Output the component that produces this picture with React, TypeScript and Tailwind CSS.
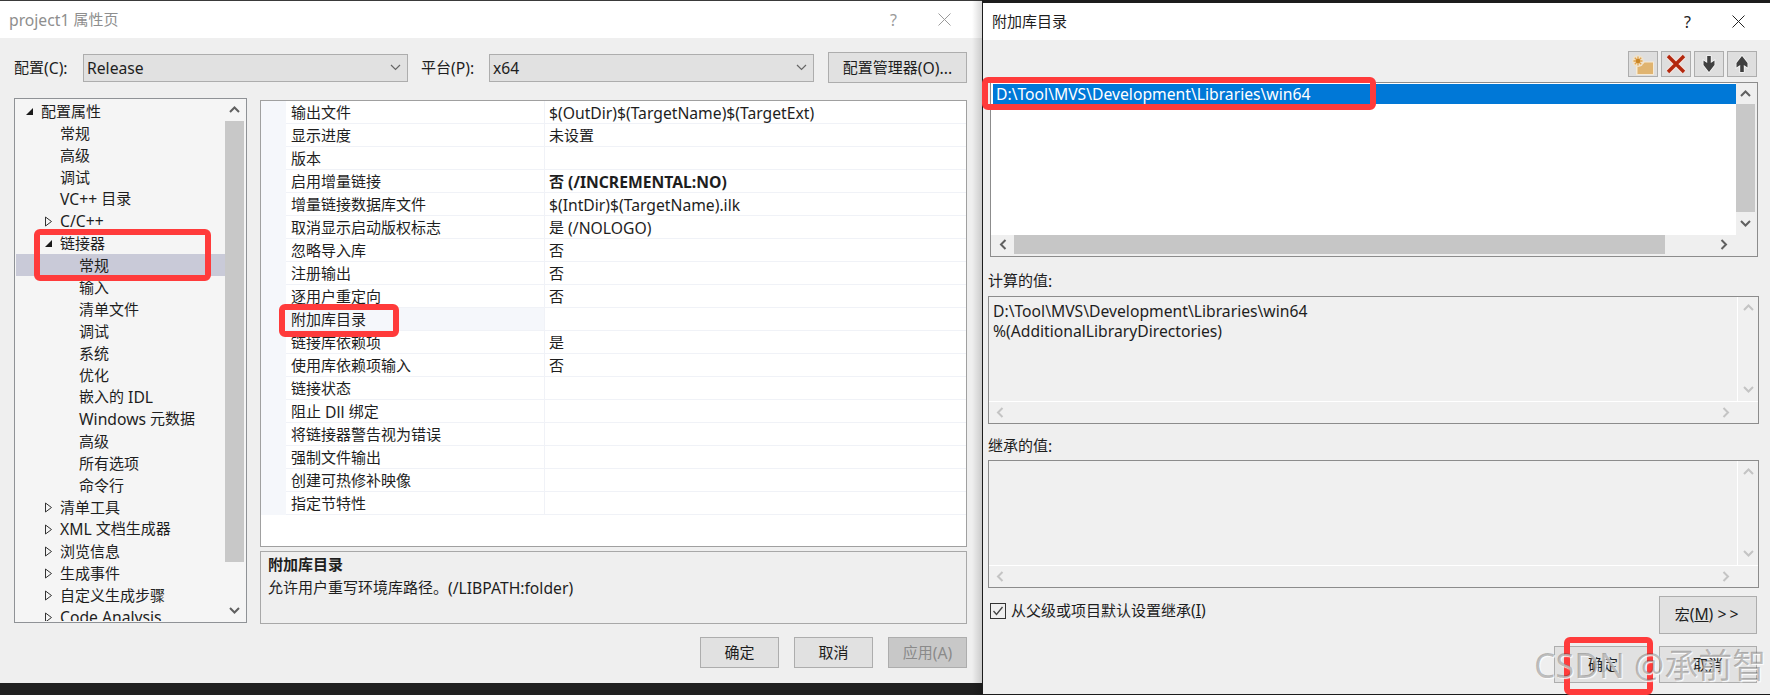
import React from "react";

const FONT = "font-['Noto_Sans','Noto_Sans_CJK_SC',sans-serif]";

type TreeRow = { label: string; level: 0 | 1 | 2; arrow?: "open" | "closed"; selected?: boolean };

const treeRows: TreeRow[] = [
  { label: "配置属性", level: 0, arrow: "open" },
  { label: "常规", level: 1 },
  { label: "高级", level: 1 },
  { label: "调试", level: 1 },
  { label: "VC++ 目录", level: 1 },
  { label: "C/C++", level: 1, arrow: "closed" },
  { label: "链接器", level: 1, arrow: "open" },
  { label: "常规", level: 2, selected: true },
  { label: "输入", level: 2 },
  { label: "清单文件", level: 2 },
  { label: "调试", level: 2 },
  { label: "系统", level: 2 },
  { label: "优化", level: 2 },
  { label: "嵌入的 IDL", level: 2 },
  { label: "Windows 元数据", level: 2 },
  { label: "高级", level: 2 },
  { label: "所有选项", level: 2 },
  { label: "命令行", level: 2 },
  { label: "清单工具", level: 1, arrow: "closed" },
  { label: "XML 文档生成器", level: 1, arrow: "closed" },
  { label: "浏览信息", level: 1, arrow: "closed" },
  { label: "生成事件", level: 1, arrow: "closed" },
  { label: "自定义生成步骤", level: 1, arrow: "closed" },
  { label: "Code Analysis", level: 1, arrow: "closed" },
];

const levelPad = { 0: "pl-[9px]", 1: "pl-[28px]", 2: "pl-[47px]" };

const gridRows: [string, string, boolean?][] = [
  ["输出文件", "$(OutDir)$(TargetName)$(TargetExt)"],
  ["显示进度", "未设置"],
  ["版本", ""],
  ["启用增量链接", "否 (/INCREMENTAL:NO)", true],
  ["增量链接数据库文件", "$(IntDir)$(TargetName).ilk"],
  ["取消显示启动版权标志", "是 (/NOLOGO)"],
  ["忽略导入库", "否"],
  ["注册输出", "否"],
  ["逐用户重定向", "否"],
  ["附加库目录", ""],
  ["链接库依赖项", "是"],
  ["使用库依赖项输入", "否"],
  ["链接状态", ""],
  ["阻止 Dll 绑定", ""],
  ["将链接器警告视为错误", ""],
  ["强制文件输出", ""],
  ["创建可热修补映像", ""],
  ["指定节特性", ""],
];

// latin runs sit a bit bigger and lower than the CJK ones, like the Windows UI font
function T({ s }: { s: string }) {
  return (
    <span>
      {s.split(/([\x00-\x7f]+)/).map((part, i) =>
        /^[\x00-\x7f]+$/.test(part) ? (
          <span key={i} className="relative top-px text-[15.7px]">{part}</span>
        ) : (
          part
        )
      )}
    </span>
  );
}

function Chevron({ dir, light }: { dir: "up" | "down" | "left" | "right"; light?: boolean }) {
  const points = {
    up: "2,8 6.5,3.5 11,8",
    down: "2,4 6.5,8.5 11,4",
    left: "8.5,2 4,6.5 8.5,11",
    right: "4.5,2 9,6.5 4.5,11",
  }[dir];
  return (
    <svg width="13" height="13" viewBox="0 0 13 13" fill="none" stroke={light ? "#c4c4c4" : "#606060"} strokeWidth="2">
      <polyline points={points} />
    </svg>
  );
}

function TreeArrow({ kind }: { kind: "open" | "closed" }) {
  return kind === "open" ? (
    <svg width="9" height="9" viewBox="0 0 9 9">
      <polygon points="8,1 8,8 1,8" fill="#1a1a1a" />
    </svg>
  ) : (
    <svg width="9" height="11" viewBox="0 0 9 11" fill="none" stroke="#333" strokeWidth="1">
      <polygon points="1.5,1 7.5,5.5 1.5,10" />
    </svg>
  );
}

function Caret() {
  return (
    <svg width="11" height="7" viewBox="0 0 11 7" fill="none" stroke="#666" strokeWidth="1.2">
      <polyline points="1,1 5.5,5.5 10,1" />
    </svg>
  );
}

function Select({ value, width }: { value: string; width: string }) {
  return (
    <div className={`${width} h-[28px] flex items-center justify-between bg-[#e1e1e1] border border-[#adadad] pl-[3px] pr-[6px]`}>
      <T s={value} />
      <Caret />
    </div>
  );
}

function Btn({ children, className = "" }: { children: React.ReactNode; className?: string }) {
  return (
    <div className={`flex items-center justify-center bg-[#e1e1e1] border border-[#adadad] ${className}`}>{children}</div>
  );
}

function WinButtons({ color }: { color: string }) {
  return (
    <div className="flex items-center gap-[41px] pr-[25px]" style={{ color }}>
      <span className="text-[16px]">?</span>
      <svg width="13" height="13" viewBox="0 0 13 13" stroke="currentColor" strokeWidth="1" fill="none">
        <path d="M0.5 0.5 L12.5 12.5 M12.5 0.5 L0.5 12.5" />
      </svg>
    </div>
  );
}

function PropertyPage() {
  return (
    <div className="relative w-[982px] h-full flex flex-col">
      <div className="h-px bg-[#3a3a3a]" />
      <div className="h-[37px] bg-white flex items-center justify-between pl-[9px]">
        <span className="text-[#8e8e8e]"><T s="project1 属性页" /></span>
        <div className="mr-[6px]">
          <WinButtons color="#9a9a9a" />
        </div>
      </div>

      <div className="h-[645px] bg-[#efefef] pl-[14px] pt-[14px]">
        <div className="h-[31px] flex items-center">
          <span className="w-[69px]"><T s="配置(C):" /></span>
          <Select value="Release" width="w-[325px]" />
          <span className="ml-[13px] w-[68px]"><T s="平台(P):" /></span>
          <Select value="x64" width="w-[325px]" />
          <Btn className="ml-[14px] w-[139px] h-[31px]"><T s="配置管理器(O)..." /></Btn>
        </div>

        <div className="mt-[15px] flex items-start">
          {/* tree */}
          <div className="w-[233px] h-[525px] border border-[#8f9296] bg-[#f5f5f5] flex p-px pr-[2px] overflow-hidden">
            <div className="flex-1 overflow-hidden">
              {treeRows.map((row, i) => (
                <div
                  key={i}
                  className={`h-[22px] flex items-center ${levelPad[row.level]} ${row.selected ? "bg-[#c9cad8]" : ""}`}
                >
                  <span className="w-4 flex items-center">{row.arrow && <TreeArrow kind={row.arrow} />}</span>
                  <span className="whitespace-nowrap"><T s={row.label} /></span>
                </div>
              ))}
            </div>
            <div className="w-[19px] flex flex-col items-center">
              <div className="h-[21px] flex items-center justify-center"><Chevron dir="up" /></div>
              <div className="w-full h-[441px] bg-[#c8c8c8]" />
              <div className="flex-1 flex items-end justify-center pb-[4px]"><Chevron dir="down" /></div>
            </div>
          </div>

          <div className="ml-[13px] w-[707px] mt-[2px] flex flex-col gap-[4px]">
            {/* property grid */}
            <div className="h-[447px] border border-[#a0a0a0] bg-white">
              {gridRows.map(([name, value, bold], i) => (
                <div key={i} className="h-[23px] flex">
                  <div className="w-[25px] bg-[#f5f7fb]" />
                  <div
                    className={`w-[258px] pl-[5px] pt-px flex items-center border-b border-[#f0f2f7] whitespace-nowrap ${name === "附加库目录" ? "bg-[#f5f7fb]" : ""}`}
                  >
                    <T s={name} />
                  </div>
                  <div
                    className={`flex-1 pl-[4px] pt-px flex items-center border-b border-l border-[#f0f2f7] ${bold ? "font-bold" : ""}`}
                  >
                    <T s={value} />
                  </div>
                </div>
              ))}
            </div>

            <div className="h-[73px] border border-[#a8a8a8] px-[7px] pt-[1px]">
              <div className="h-[23px] flex items-center font-bold">附加库目录</div>
              <div className="h-[23px] flex items-center"><T s="允许用户重写环境库路径。(/LIBPATH:folder)" /></div>
            </div>

            <div className="mt-[9px] flex justify-end gap-[15px]">
              <Btn className="w-[79px] h-[31px]">确定</Btn>
              <Btn className="w-[79px] h-[31px]">取消</Btn>
              <Btn className="w-[79px] h-[31px] !bg-[#c8c8c8] text-[#8a8a8a]"><T s="应用(A)" /></Btn>
            </div>
          </div>
        </div>
      </div>

      <div className="flex-1 bg-[#202020]" />
      <div className="absolute right-0 top-0 bottom-0 w-[10px] bg-gradient-to-r from-transparent to-black/15" />
    </div>
  );
}

function ToolIcon({ kind }: { kind: "folder" | "delete" | "down" | "up" }) {
  if (kind === "folder") {
    return (
      <svg width="28" height="24" viewBox="0 0 28 24">
        <path d="M7 8 H13 L15 9.5 H25 V23 H7 Z" fill="#f6ead6" />
        <path d="M8.5 12 H14 L15.5 10.5 H24 V22 H8.5 Z" fill="#e0b470" />
        <circle cx="9" cy="9" r="6" fill="#efe2cc" />
        <path d="M9 4.5 V13.5 M4.5 9 H13.5 M5.8 5.8 L12.2 12.2 M12.2 5.8 L5.8 12.2" stroke="#e2a24a" strokeWidth="1.3" />
        <circle cx="9" cy="9" r="2.2" fill="#c98526" />
      </svg>
    );
  }
  if (kind === "delete") {
    return (
      <svg width="22" height="22" viewBox="0 0 22 22">
        <path d="M3 3 L19 19 M19 3 L3 19" stroke="#f3e3de" strokeWidth="6" />
        <path d="M3 3 L19 19 M19 3 L3 19" stroke="#b3280e" strokeWidth="3.4" />
      </svg>
    );
  }
  return (
    <svg width="16" height="20" viewBox="0 0 16 20" className={kind === "up" ? "rotate-180" : ""}>
      <path
        d="M6.2 2 H9.8 V9 L13.5 6.5 V11 L8 18 L2.5 11 V6.5 L6.2 9 Z"
        fill="#404040"
        stroke="#f6f6f6"
        strokeWidth="1.6"
        paintOrder="stroke"
      />
    </svg>
  );
}

function ReadOnlyBox({ children }: { children?: React.ReactNode }) {
  return (
    <div className="h-[128px] w-[771px] border border-[#8c8c8c] bg-[#f0f0f0] flex flex-col">
      <div className="flex-1 flex min-h-0 border-b border-white">
        <div className="flex-1 pl-[4px] pt-[3px]">{children}</div>
        <div className="w-[21px] border-l border-white flex flex-col items-center justify-between py-[5px]">
          <Chevron dir="up" light />
          <Chevron dir="down" light />
        </div>
      </div>
      <div className="h-[21px] flex items-center justify-between pl-[5px] pr-[26px]">
        <Chevron dir="left" light />
        <Chevron dir="right" light />
      </div>
    </div>
  );
}

function LibraryDialog() {
  return (
    <div className="relative flex-1 h-full flex flex-col border-l border-[#1c1c1c]">
      <div className="h-[3px] bg-[#1c1c1c]" />
      <div className="h-[37px] bg-white flex items-center justify-between pl-[9px]">
        <span>附加库目录</span>
        <WinButtons color="#222" />
      </div>

      <div className="flex-1 bg-[#efefef] pl-[5px] pr-[11px] flex flex-col">
        <div className="mt-[11px] h-[26px] flex justify-end gap-[3px] pr-[2px]">
          <Btn className="w-[30px] h-[26px] !bg-[#dedede]"><ToolIcon kind="folder" /></Btn>
          <Btn className="w-[30px] h-[26px] !bg-[#dedede]"><ToolIcon kind="delete" /></Btn>
          <Btn className="w-[30px] h-[26px] !bg-[#dedede]"><ToolIcon kind="down" /></Btn>
          <Btn className="w-[30px] h-[26px] !bg-[#dedede]"><ToolIcon kind="up" /></Btn>
        </div>

        <div className="ml-[2px] mt-[5px] w-[768px] h-[175px] border border-[#8c8c8c] bg-[#efefef] flex flex-col">
          <div className="flex-1 flex min-h-0">
            <div className="flex-1 bg-white pt-px pl-px">
              <div className="h-[20px] bg-[#0078d7] text-white flex items-center pl-[3px] ml-px">
                <T s="D:\Tool\MVS\Development\Libraries\win64" />
              </div>
            </div>
            <div className="w-[21px] pr-[2px] pt-[1px] flex flex-col items-center">
              <div className="h-[20px] flex items-center justify-center"><Chevron dir="up" /></div>
              <div className="w-full h-[108px] bg-[#c8c8c8]" />
              <div className="flex-1 flex items-center justify-center"><Chevron dir="down" /></div>
            </div>
          </div>
          <div className="h-[21px] flex items-center pb-[2px] pl-[1px]">
            <div className="w-[22px] flex justify-center"><Chevron dir="left" /></div>
            <div className="w-[651px] h-[19px] bg-[#c6c6c6]" />
            <div className="flex-1 flex justify-end pr-[27px]"><Chevron dir="right" /></div>
          </div>
        </div>

        <div className="mt-[14px] h-[20px] flex items-center"><T s="计算的值:" /></div>
        <div className="mt-[5px]">
          <ReadOnlyBox>
            <div className="leading-[20px]"><T s="D:\Tool\MVS\Development\Libraries\win64" /></div>
            <div className="leading-[20px]"><T s="%(AdditionalLibraryDirectories)" /></div>
          </ReadOnlyBox>
        </div>

        <div className="mt-[12px] h-[20px] flex items-center"><T s="继承的值:" /></div>
        <div className="mt-[4px]">
          <ReadOnlyBox />
        </div>

        <div className="mt-[8px] h-[38px] flex justify-between pl-[2px] pr-[2px]">
          <div className="h-[30px] flex items-center gap-[5px]">
            <div className="w-[16px] h-[16px] border border-[#333] bg-[#efefef] flex items-center justify-center">
              <svg width="12" height="12" viewBox="0 0 12 12" fill="none" stroke="#444" strokeWidth="1.3">
                <polyline points="1.5,6 4.5,9.5 10.5,2" />
              </svg>
            </div>
            <span>
              从父级或项目默认设置继承<span className="text-[15.7px]">(<span className="underline">I</span>)</span>
            </span>
          </div>
          <Btn className="w-[98px] h-[38px]">
            <span>
              宏<span className="text-[15.7px]">(<span className="underline">M</span>) <span className="tracking-[3px]">&gt;&gt;</span></span>
            </span>
          </Btn>
        </div>

        <div className="mt-[12px] flex justify-end gap-[7px] pr-[2px]">
          <Btn className="w-[98px] h-[37px]">确定</Btn>
          <Btn className="w-[98px] h-[37px]">取消</Btn>
        </div>
      </div>
      <div className="h-px bg-[#1c1c1c]" />
    </div>
  );
}

export default function App() {
  return (
    <div className={`relative w-[1770px] h-[695px] overflow-hidden flex text-[15px] leading-none text-[#1e1e1e] bg-[#202020] ${FONT}`}>
      <PropertyPage />
      <LibraryDialog />

      {/* red annotation boxes */}
      <div className="absolute left-[34px] top-[229px] w-[177px] h-[52px] border-[6px] border-[#ff3b3b] rounded-[6px]" />
      <div className="absolute left-[279px] top-[304px] w-[120px] h-[33px] border-[6px] border-[#ff3b3b] rounded-[6px]" />
      <div className="absolute left-[982px] top-[77px] w-[394px] h-[33px] border-[6px] border-[#ff3b3b] rounded-[6px]" />
      <div className="absolute left-[1564px] top-[637px] w-[89px] h-[58px] border-[6px] border-[#ff3b3b] rounded-[6px]" />

      {/* watermark */}
      <div className="absolute left-[1534px] top-[645px] text-[34px] leading-[40px] whitespace-nowrap text-black/25 [text-shadow:1px_1px_1px_rgba(255,255,255,0.9)]">
        CSDN @承前智
      </div>
    </div>
  );
}
